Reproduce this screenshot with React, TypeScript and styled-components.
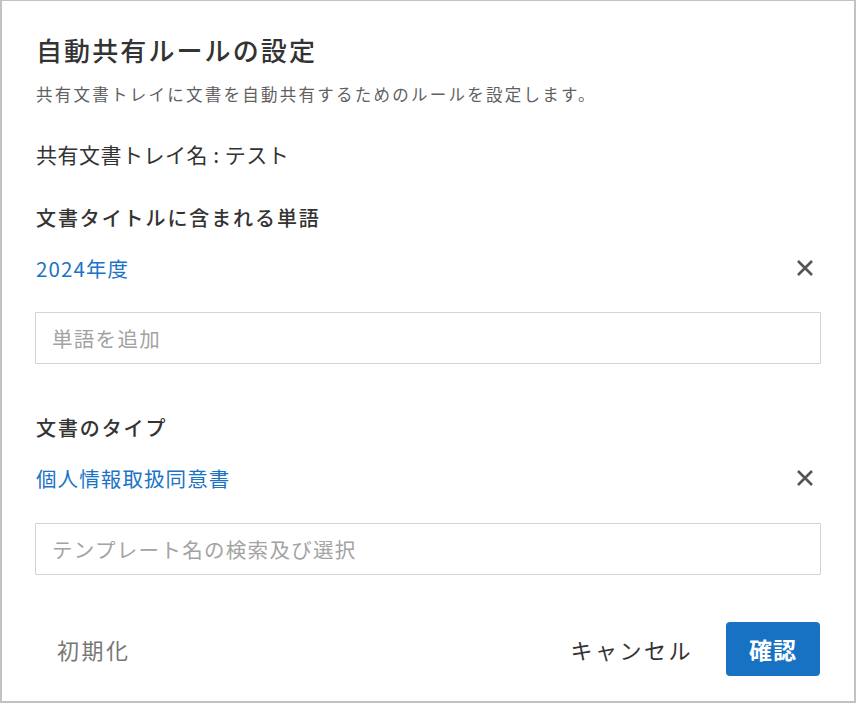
import styled, { createGlobalStyle } from 'styled-components';

const GlobalStyle = createGlobalStyle`
	html, body {
		margin: 0;
		padding: 0;
		background: #ffffff;
	}
	body {
		font-family: "Noto Sans CJK JP", "Noto Sans", sans-serif;
	}
`

//styles
const Frame = styled.div`
	box-sizing: border-box;
	width: 856px;
	height: 703px;
	border: 2px solid #c2c2c2;
	border-top-width: 1px;
	padding: 31px 34px 0 34px;
	display: flex;
	flex-direction: column;
	background: #fff;
`

const Title = styled.h2`
	margin: 0;
	font-size: 26px;
	line-height: 36px;
	font-weight: 500;
	letter-spacing: 2.1px;
	color: #333;
`

const Lead = styled.p`
	margin: 14px 0 0 0;
	font-size: 16.5px;
	line-height: 24px;
	letter-spacing: 2.25px;
	color: #5f5f5f;
`

const TrayName = styled.p`
	margin: 34px 0 0 0;
	font-size: 21px;
	line-height: 28px;
	letter-spacing: 0.5px;
	color: #333;
`

const Section = styled.section<{ $top: number }>`
	margin-top: ${p => p.$top}px;
	display: flex;
	flex-direction: column;
`

const Label = styled.h3`
	margin: 0;
	font-size: 20px;
	line-height: 28px;
	font-weight: 500;
	letter-spacing: 1.9px;
	color: #333;
`

const TagRow = styled.div`
	margin-top: 20px;
	height: 32px;
	display: flex;
	align-items: center;
	justify-content: space-between;
`

const TagText = styled.span`
	font-size: 20.5px;
	letter-spacing: 1.1px;
	color: #1a73c6;
`

const RemoveButton = styled.button`
	width: 32px;
	height: 32px;
	margin-right: -1px;
	padding: 0;
	border: none;
	background: transparent;
	display: flex;
	align-items: center;
	justify-content: center;
	cursor: pointer;
`

const Field = styled.input<{ $top: number }>`
	box-sizing: border-box;
	margin-top: ${p => p.$top}px;
	width: 786px;
	margin-left: -1px;
	height: 52px;
	border: 1px solid #d3d3d3;
	border-radius: 1px;
	padding: 0 16px;
	font-family: "Noto Sans CJK JP", "Noto Sans", sans-serif;
	font-size: 20.5px;
	letter-spacing: 1.3px;
	color: #333;
	outline: none;
	&::placeholder {
		color: #a3a3a3;
	}
`

const Footer = styled.div`
	margin-top: 47px;
	display: flex;
	align-items: center;
	justify-content: space-between;
`

const Actions = styled.div`
	display: flex;
	align-items: center;
	gap: 12px;
`

const TextButton = styled.button<{ $muted?: boolean }>`
	height: 54px;
	padding: 0 21px;
	border: none;
	background: transparent;
	font-family: "Noto Sans CJK JP", "Noto Sans", sans-serif;
	font-size: 22px;
	letter-spacing: 2.5px;
	color: ${p => (p.$muted ? '#777' : '#333')};
	cursor: pointer;
`

const PrimaryButton = styled.button`
	width: 94px;
	height: 54px;
	border: none;
	border-radius: 4px;
	background: #1872c4;
	color: #fff;
	font-family: "Noto Sans CJK JP", "Noto Sans", sans-serif;
	font-size: 23px;
	font-weight: 700;
	letter-spacing: 1px;
	cursor: pointer;
`

function CloseIcon() {
	return (
		<svg width="18" height="18" viewBox="0 0 18 18">
			<path d="M2 2 L16 16 M16 2 L2 16" stroke="#555" strokeWidth="2.6" fill="none" />
		</svg>
	)
}

export default function App() {
	return (
		<>
			<GlobalStyle />
			<Frame>
				<Title>自動共有ルールの設定</Title>
				<Lead>共有文書トレイに文書を自動共有するためのルールを設定します。</Lead>
				<TrayName>共有文書トレイ名 : テスト</TrayName>

				<Section $top={36}>
					<Label>文書タイトルに含まれる単語</Label>
					<TagRow>
						<TagText>2024年度</TagText>
						<RemoveButton aria-label="削除"><CloseIcon /></RemoveButton>
					</TagRow>
					<Field $top={28} placeholder="単語を追加" />
				</Section>

				<Section $top={50}>
					<Label>文書のタイプ</Label>
					<TagRow>
						<TagText>個人情報取扱同意書</TagText>
						<RemoveButton aria-label="削除"><CloseIcon /></RemoveButton>
					</TagRow>
					<Field $top={29} placeholder="テンプレート名の検索及び選択" />
				</Section>

				<Footer>
					<TextButton $muted>初期化</TextButton>
					<Actions>
						<TextButton>キャンセル</TextButton>
						<PrimaryButton>確認</PrimaryButton>
					</Actions>
				</Footer>
			</Frame>
		</>
	)
}
